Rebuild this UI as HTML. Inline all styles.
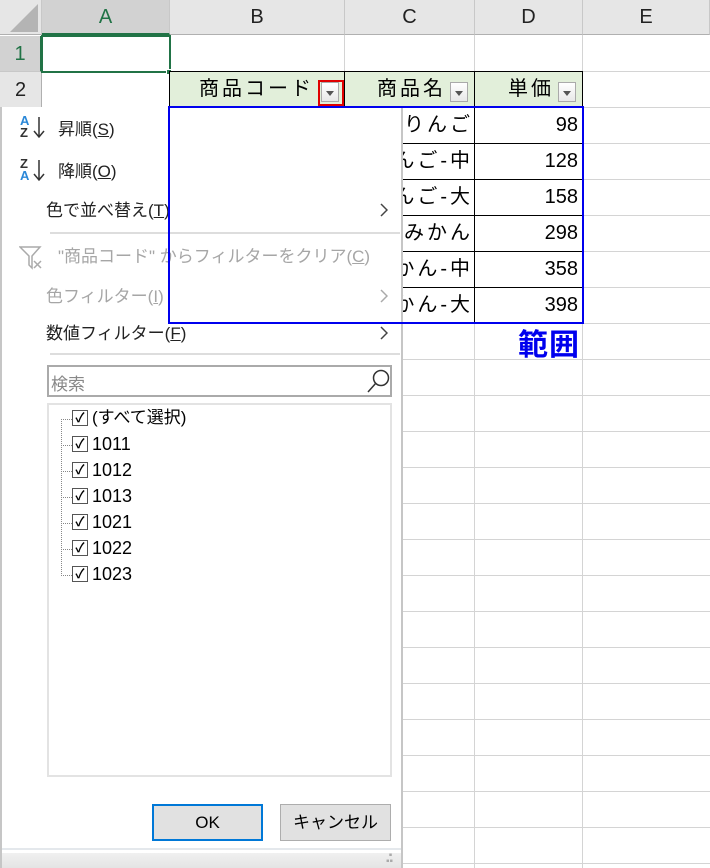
<!DOCTYPE html>
<html><head><meta charset="utf-8"><style>
*{margin:0;padding:0;box-sizing:border-box}
body{width:710px;height:868px;overflow:hidden;background:#fff;position:relative;font-family:"Liberation Sans","Noto Sans CJK JP",sans-serif;color:#000}
.a{position:absolute}
.hl{position:absolute;left:0;width:710px;height:1px;background:#d4d4d4}
.vl{position:absolute;top:0;width:1px;height:868px;background:#d4d4d4}
.ch{position:absolute;top:0;height:35px;background:#e6e6e6;font-size:20px;line-height:35px;text-align:center;color:#222;border-right:1px solid #c8c8c8;border-bottom:1px solid #b0b0b0}
.rh{position:absolute;left:0;width:42px;height:36px;background:#e6e6e6;font-size:20px;line-height:36px;text-align:center;color:#222;border-bottom:1px solid #c8c8c8;border-right:1px solid #b0b0b0}
.cell{position:absolute;font-size:20px;line-height:35px;height:37px;border:1px solid #000;text-align:right;padding-right:4px;overflow:hidden;white-space:nowrap}
.jp{letter-spacing:3px}
.dd{position:absolute;width:18px;height:20px;border:1px solid #aaa;background:linear-gradient(#fff,#e8e8e8)}
.dd:after{content:"";position:absolute;left:4px;top:8px;border:4px solid transparent;border-top:5px solid #555}
.mi{position:absolute;left:46px;font-size:17px;line-height:20px;color:#222;white-space:nowrap}
.dis{color:#a6a6a6}
.arr{position:absolute;left:380px}
.cb{position:absolute;left:72px;width:16px;height:16px;border:1px solid #555;background:#fff;font-size:13px;line-height:14px;text-align:center;font-weight:bold}
.it{position:absolute;left:92px;font-size:18px;line-height:20px}
</style></head><body>
<div class="hl" style="top:71px"></div><div class="hl" style="top:107px"></div>
<div class="hl" style="top:143px"></div><div class="hl" style="top:179px"></div>
<div class="hl" style="top:215px"></div><div class="hl" style="top:251px"></div>
<div class="hl" style="top:287px"></div><div class="hl" style="top:323px"></div>
<div class="hl" style="top:359px"></div><div class="hl" style="top:395px"></div>
<div class="hl" style="top:431px"></div><div class="hl" style="top:467px"></div>
<div class="hl" style="top:503px"></div><div class="hl" style="top:539px"></div>
<div class="hl" style="top:575px"></div><div class="hl" style="top:611px"></div>
<div class="hl" style="top:647px"></div><div class="hl" style="top:683px"></div>
<div class="hl" style="top:719px"></div><div class="hl" style="top:755px"></div>
<div class="hl" style="top:791px"></div><div class="hl" style="top:827px"></div>
<div class="hl" style="top:863px"></div>
<div class="vl" style="left:169px"></div><div class="vl" style="left:344px"></div>
<div class="vl" style="left:474px"></div><div class="vl" style="left:582px"></div>
<div class="ch" style="left:0;width:42px;background:#e6e6e6"><div class="a" style="left:10px;top:4px;width:0;height:0;border-left:28px solid transparent;border-bottom:28px solid #b4b4b4"></div></div>
<div class="ch" style="left:42px;width:128px;background:#d2d2d2;color:#217346;border-bottom:2px solid #217346">A</div>
<div class="ch" style="left:170px;width:175px">B</div>
<div class="ch" style="left:345px;width:130px">C</div>
<div class="ch" style="left:475px;width:108px">D</div>
<div class="ch" style="left:583px;width:127px">E</div>
<div class="rh" style="top:36px;background:#d2d2d2;color:#217346;border-right:2px solid #217346">1</div>
<div class="rh" style="top:72px">2</div>
<div class="a" style="left:41px;top:35px;width:130px;height:38px;border:2px solid #217346"></div>
<div class="a" style="left:166px;top:69px;width:6px;height:6px;background:#217346;border:1px solid #fff"></div>
<div class="cell jp" style="left:169px;top:71px;width:176px;background:#e2efda;padding-right:30px">商品コード</div>
<div class="cell jp" style="left:344px;top:71px;width:131px;background:#e2efda;padding-right:28px">商品名</div>
<div class="cell jp" style="left:474px;top:71px;width:109px;background:#e2efda;padding-right:28px">単価</div>
<div class="dd" style="left:321px;top:82px"></div>
<div class="a" style="left:318px;top:80px;width:26px;height:26px;border:2px solid #e00000"></div>
<div class="dd" style="left:450px;top:82px"></div>
<div class="dd" style="left:558px;top:82px"></div>
<div class="cell jp" style="left:344px;top:107px;width:131px;padding-right:1px">りんご</div>
<div class="cell jp" style="left:344px;top:143px;width:131px;padding-right:1px">りんご-中</div>
<div class="cell jp" style="left:344px;top:179px;width:131px;padding-right:1px">りんご-大</div>
<div class="cell jp" style="left:344px;top:215px;width:131px;padding-right:1px">みかん</div>
<div class="cell jp" style="left:344px;top:251px;width:131px;padding-right:1px">みかん-中</div>
<div class="cell jp" style="left:344px;top:287px;width:131px;padding-right:1px">みかん-大</div>
<div class="cell" style="left:474px;top:107px;width:109px">98</div>
<div class="cell" style="left:474px;top:143px;width:109px">128</div>
<div class="cell" style="left:474px;top:179px;width:109px">158</div>
<div class="cell" style="left:474px;top:215px;width:109px">298</div>
<div class="cell" style="left:474px;top:251px;width:109px">358</div>
<div class="cell" style="left:474px;top:287px;width:109px">398</div>
<div class="a" style="left:518px;top:326px;font-size:30px;font-weight:bold;color:#0000ee;line-height:40px;letter-spacing:1px">範囲</div>
<!-- menu -->
<div class="a" style="left:0;top:107px;width:403px;height:761px;background:#fff;border-left:2px solid #c6c6c6;border-right:2px solid #c6c6c6"></div>
<div class="a" style="left:20px;top:115px;font-size:13px;line-height:12px;color:#2b88d8;font-weight:bold">A</div>
<div class="a" style="left:20px;top:127px;font-size:13px;line-height:12px;color:#333;font-weight:bold">Z</div>
<svg class="a" style="left:33px;top:117px" width="12" height="22"><path d="M6 0v20M1 14l5 6 5-6" fill="none" stroke="#333" stroke-width="1.5"/></svg>
<div class="mi" style="left:58px;top:120px">昇順(<u>S</u>)</div>
<div class="a" style="left:20px;top:158px;font-size:13px;line-height:12px;color:#333;font-weight:bold">Z</div>
<div class="a" style="left:20px;top:170px;font-size:13px;line-height:12px;color:#2b88d8;font-weight:bold">A</div>
<svg class="a" style="left:33px;top:160px" width="12" height="22"><path d="M6 0v20M1 14l5 6 5-6" fill="none" stroke="#333" stroke-width="1.5"/></svg>
<div class="mi" style="left:58px;top:162px">降順(<u>O</u>)</div>
<div class="mi" style="top:201px">色で並べ替え(<u>T</u>)</div>
<svg class="arr" style="top:203px" width="8" height="14"><path d="M1 1l6 6-6 6" fill="none" stroke="#444" stroke-width="1.5"/></svg>
<div class="a" style="left:50px;top:232px;width:350px;height:2px;background:#ddd"></div>
<svg class="a" style="left:19px;top:245px" width="26" height="26"><path d="M1 2h20l-8 9v12l-3-3v-9z" fill="none" stroke="#aaa" stroke-width="1.5"/><path d="M15 16l7 7M22 16l-7 7" stroke="#aaa" stroke-width="1.5"/></svg>
<div class="mi dis" style="left:58px;top:247px">"商品コード" からフィルターをクリア(<u>C</u>)</div>
<div class="mi dis" style="top:287px">色フィルター(<u>I</u>)</div>
<svg class="arr" style="top:289px" width="8" height="14"><path d="M1 1l6 6-6 6" fill="none" stroke="#aaa" stroke-width="1.5"/></svg>
<div class="mi" style="top:324px">数値フィルター(<u>F</u>)</div>
<svg class="arr" style="top:326px" width="8" height="14"><path d="M1 1l6 6-6 6" fill="none" stroke="#444" stroke-width="1.5"/></svg>
<div class="a" style="left:50px;top:353px;width:350px;height:2px;background:#ddd"></div>
<div class="a" style="left:47px;top:365px;width:345px;height:32px;border:2px solid #aaa"></div>
<div class="a" style="left:51px;top:370px;font-size:17px;color:#888">検索</div>
<svg class="a" style="left:366px;top:368px" width="26" height="26"><circle cx="15" cy="10" r="7.5" fill="none" stroke="#333" stroke-width="1.5"/><path d="M10 15L2 24" stroke="#333" stroke-width="1.5"/></svg>
<div class="a" style="left:47px;top:403px;width:345px;height:374px;border:2px solid #e3e3e3"></div>
<div class="a" style="left:61px;top:419px;width:1px;height:157px;border-left:1px dotted #888"></div>
<div class="a" style="left:61px;top:419px;width:11px;border-top:1px dotted #888"></div>
<div class="a" style="left:61px;top:445px;width:11px;border-top:1px dotted #888"></div>
<div class="a" style="left:61px;top:471px;width:11px;border-top:1px dotted #888"></div>
<div class="a" style="left:61px;top:497px;width:11px;border-top:1px dotted #888"></div>
<div class="a" style="left:61px;top:523px;width:11px;border-top:1px dotted #888"></div>
<div class="a" style="left:61px;top:549px;width:11px;border-top:1px dotted #888"></div>
<div class="a" style="left:61px;top:575px;width:11px;border-top:1px dotted #888"></div>
<div class="cb" style="top:410px">✓</div><div class="it" style="top:408px;font-size:17px">(すべて選択)</div>
<div class="cb" style="top:436px">✓</div><div class="it" style="top:434px">1011</div>
<div class="cb" style="top:462px">✓</div><div class="it" style="top:460px">1012</div>
<div class="cb" style="top:488px">✓</div><div class="it" style="top:486px">1013</div>
<div class="cb" style="top:514px">✓</div><div class="it" style="top:512px">1021</div>
<div class="cb" style="top:540px">✓</div><div class="it" style="top:538px">1022</div>
<div class="cb" style="top:566px">✓</div><div class="it" style="top:564px">1023</div>
<div class="a" style="left:152px;top:804px;width:111px;height:37px;border:2px solid #0078d7;background:#e1e1e1;font-size:17px;line-height:33px;text-align:center">OK</div>
<div class="a" style="left:280px;top:804px;width:111px;height:37px;border:1px solid #adadad;background:#e1e1e1;font-size:17px;line-height:35px;text-align:center">キャンセル</div>
<div class="a" style="left:2px;top:848px;width:399px;height:20px;background:linear-gradient(#e4e8ec 0,#e4e8ec 2px,#fff 2px,#fff 5px,#f0f0f0 5px,#e4e4e4)"></div>
<div class="a" style="left:386px;top:853px;color:#aaa;font-size:10px;line-height:6px">&nbsp;▪<br>▪▪</div>
<div class="a" style="left:168px;top:106px;width:416px;height:218px;border:2px solid #0000ee"></div>
</body></html>
